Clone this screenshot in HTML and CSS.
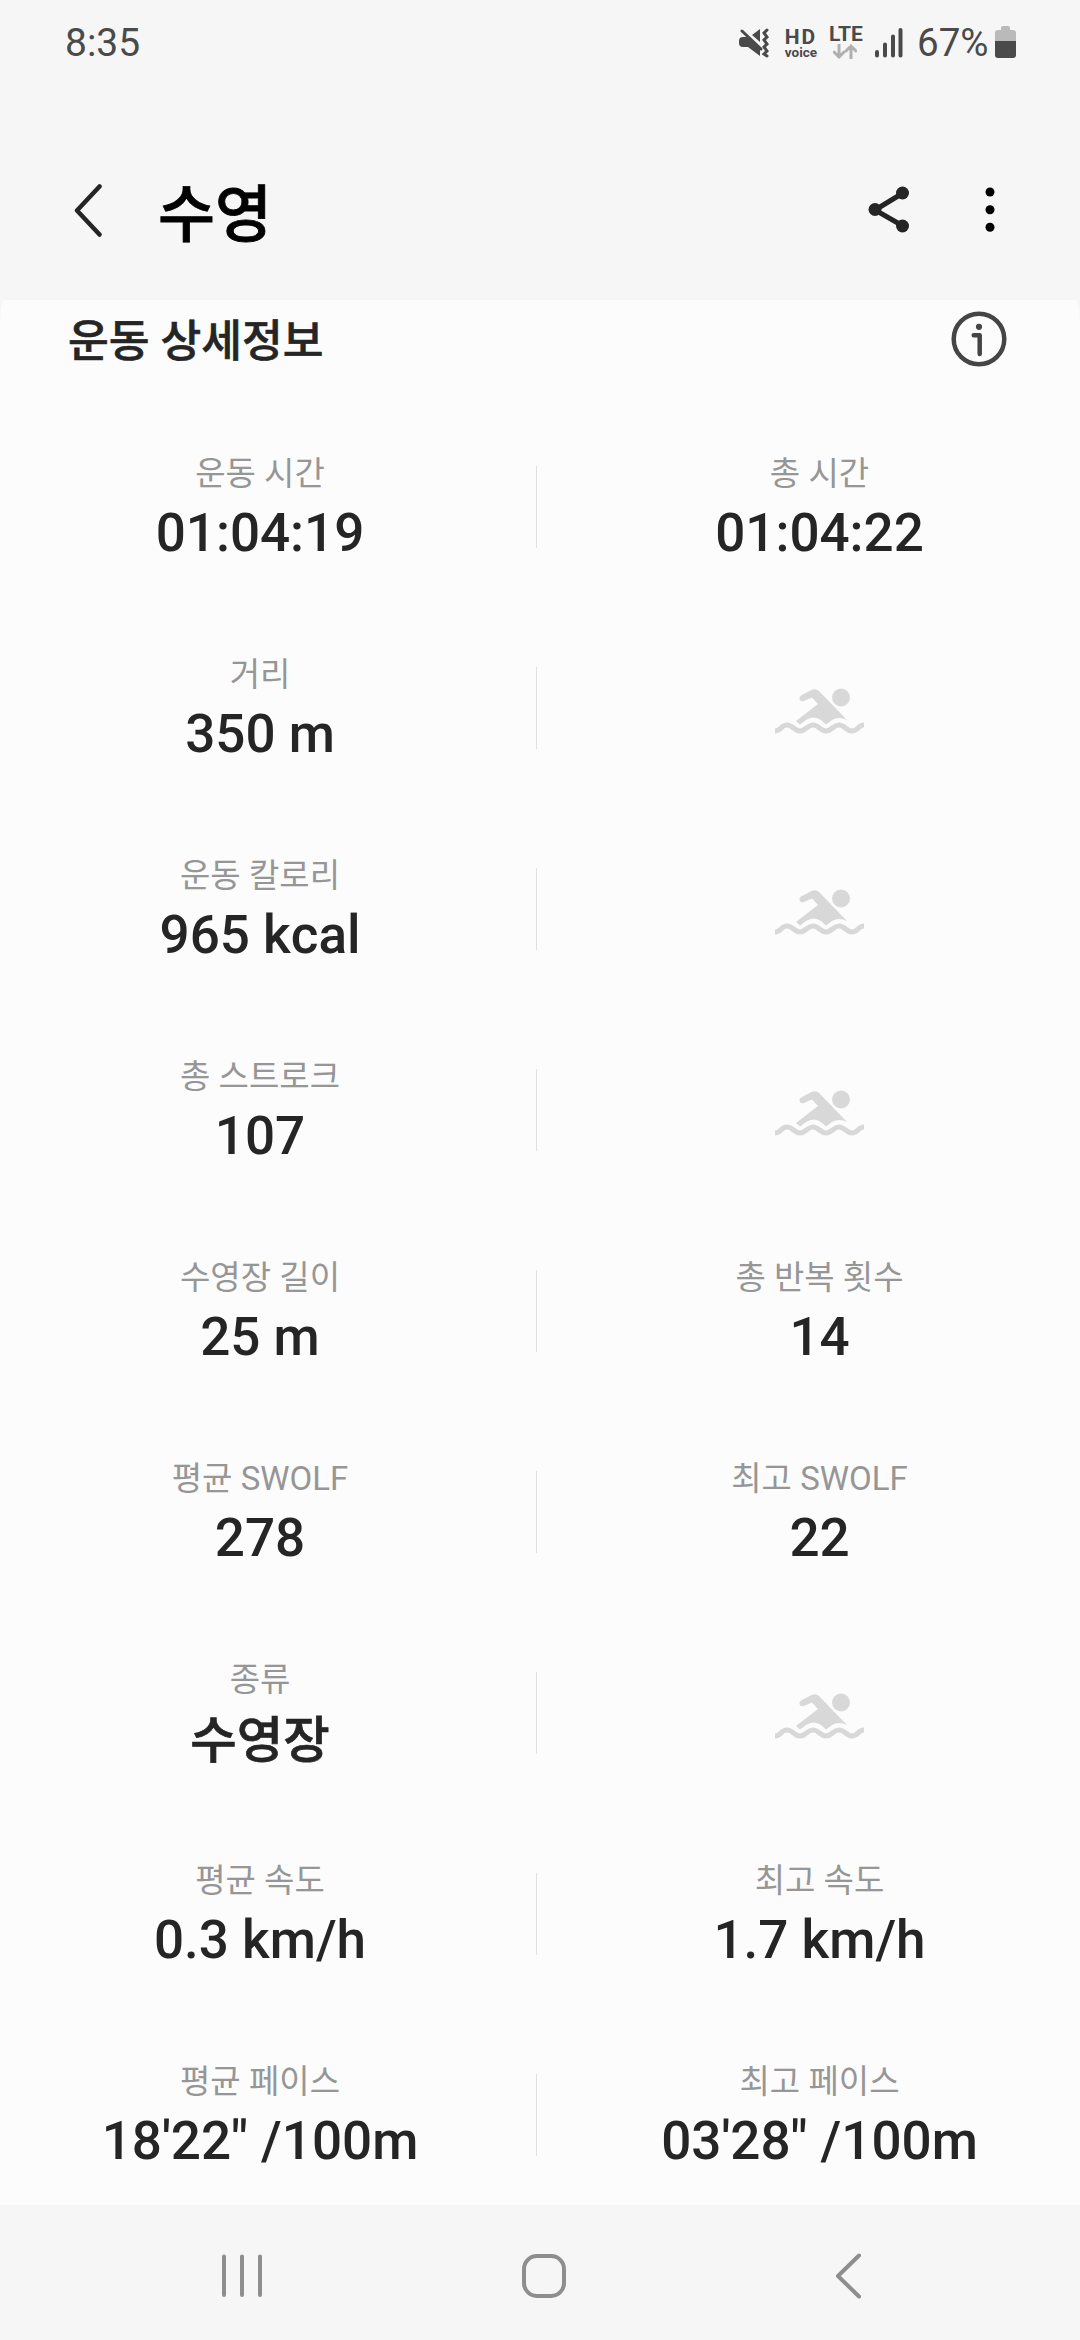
FILE: index.html
```html
<!DOCTYPE html>
<html lang="ko">
<head>
	<meta charset="utf-8">
	<title>수영</title>
	<link rel="stylesheet" href="styles.css">
</head>
<body>
	<svg class="defs" width="0" height="0">
		<symbol id="swimmer" viewBox="0 0 90 46">
			<path d="M26 7.500 L37 1.800 Q41 0 44 3 L72 32 Q64 28 57 32 L51 36.500 L46 32 Q39 27 31 32 L25 36.500 L21 33 L43 16 L37 9.500 L29 13 Q25 14 24.500 11 Q24 9 26 7.500Z"/>
			<circle cx="66" cy="9.500" r="9"/>
			<path class="wave" d="M0 43 C6 43 6 37 12 37 S19 43 25 43 S32 37 38 37 S45 43 51 43 S58 37 64 37 S71 43 77 43 S83 37 89 37"/>
		</symbol>
	</svg>

	<div class="status">
		<span class="clock">8:35</span>
		<svg class="mute" width="30" height="30" viewBox="0 0 30 30">
			<path d="M0 13 Q0 9 4 9 H8 L21 21 V28 L9 19 H4 Q0 19 0 15Z M21 1 V14 L13 7Z"/>
			<path class="line" d="M3 3 L22 21 M28 2 L25 5 L28 9 L25 12 L28 16 L25 19 L28 23 L25 26 L28 28"/>
		</svg>
		<div class="hd">HD<small>voice</small></div>
		<div class="lte">LTE
			<svg width="24" height="15" viewBox="0 0 24 15">
				<path d="M6 1 V13 M1 8 L6 13 L11 8 M18 14 V2 M13 7 L18 2 L23 7"/>
			</svg>
		</div>
		<svg class="signal" width="28" height="30" viewBox="0 0 28 30">
			<path d="M2 24 V27.500 M10 16.500 V27.500 M18 8.500 V27.500 M25.500 2 V27.500"/>
		</svg>
		<span class="percent">67%</span>
		<svg class="battery" width="21" height="32" viewBox="0 0 21 32">
			<path class="empty" d="M6 2 Q6 0 8 0 H13 Q15 0 15 2 V4 H18 Q21 4 21 7 V15 H0 V7 Q0 4 3 4 H6Z"/>
			<path d="M0 15 H21 V29 Q21 32 18 32 H3 Q0 32 0 29Z"/>
		</svg>
	</div>

	<div class="header">
		<svg class="back" width="28" height="53" viewBox="0 0 28 53">
			<path d="M25.500 2.500 L3 26.500 L25.500 50.500"/>
		</svg>
		<h1>수영</h1>
		<svg class="share" width="42" height="48" viewBox="0 0 42 48">
			<path d="M35 7 L7 24 L35 40"/>
			<circle cx="34.500" cy="7" r="6.500"/><circle cx="7" cy="23.500" r="6.500"/><circle cx="34.500" cy="40" r="6.500"/>
		</svg>
		<svg class="more" width="10" height="46" viewBox="0 0 10 46">
			<circle cx="5" cy="5" r="4.500"/><circle cx="5" cy="22.700" r="4.500"/><circle cx="5" cy="40.300" r="4.500"/>
		</svg>
	</div>

	<div class="card">
		<div class="card-title">
			<h2>운동 상세정보</h2>
			<svg class="info" width="56" height="56" viewBox="0 0 56 56">
				<circle class="ring" cx="28" cy="28" r="25.300"/>
				<circle cx="28" cy="15.800" r="3.100"/>
				<path d="M22.700 24.300 H28.700 V43"/>
			</svg>
		</div>

		<div class="row">
			<div class="item"><span class="label">운동 시간</span><span class="value">01:04:19</span></div>
			<div class="divider"></div>
			<div class="item"><span class="label">총 시간</span><span class="value">01:04:22</span></div>
		</div>
		<div class="row">
			<div class="item"><span class="label">거리</span><span class="value">350 m</span></div>
			<div class="divider"></div>
			<svg class="swimmer"><use href="#swimmer"/></svg>
		</div>
		<div class="row">
			<div class="item"><span class="label">운동 칼로리</span><span class="value">965 kcal</span></div>
			<div class="divider"></div>
			<svg class="swimmer"><use href="#swimmer"/></svg>
		</div>
		<div class="row">
			<div class="item"><span class="label">총 스트로크</span><span class="value">107</span></div>
			<div class="divider"></div>
			<svg class="swimmer"><use href="#swimmer"/></svg>
		</div>
		<div class="row">
			<div class="item"><span class="label">수영장 길이</span><span class="value">25 m</span></div>
			<div class="divider"></div>
			<div class="item"><span class="label">총 반복 횟수</span><span class="value">14</span></div>
		</div>
		<div class="row">
			<div class="item"><span class="label">평균 SWOLF</span><span class="value">278</span></div>
			<div class="divider"></div>
			<div class="item"><span class="label">최고 SWOLF</span><span class="value">22</span></div>
		</div>
		<div class="row">
			<div class="item"><span class="label">종류</span><span class="value korean">수영장</span></div>
			<div class="divider"></div>
			<svg class="swimmer"><use href="#swimmer"/></svg>
		</div>
		<div class="row">
			<div class="item"><span class="label">평균 속도</span><span class="value">0.3 km/h</span></div>
			<div class="divider"></div>
			<div class="item"><span class="label">최고 속도</span><span class="value">1.7 km/h</span></div>
		</div>
		<div class="row">
			<div class="item"><span class="label">평균 페이스</span><span class="value">18'22" /100m</span></div>
			<div class="divider"></div>
			<div class="item"><span class="label">최고 페이스</span><span class="value">03'28" /100m</span></div>
		</div>
	</div>

	<div class="navbar">
		<svg width="42" height="46" viewBox="0 0 42 46"><path d="M3 3.500 V42 M21 3.500 V42 M39 3.500 V42"/></svg>
		<svg class="home" width="46" height="46" viewBox="0 0 46 46"><rect x="3" y="3" width="40" height="40" rx="13"/></svg>
		<svg width="28" height="46" viewBox="0 0 28 46"><path d="M25 2.500 L4 23 L25 43.500"/></svg>
	</div>
</body>
</html>
```
FILE: styles.css
```css
* {
	box-sizing: border-box;
}

body {
	margin: 0;
	width: 1080px;
	height: 2340px;
	overflow: hidden;
	background-color: #f6f6f6;
	color: #252525;
	font-family: Roboto, "Noto Sans CJK KR", sans-serif;
}

svg {
	display: block;
	flex: none;
}

.defs {
	position: absolute;
}

/* status bar */
.status {
	display: flex;
	align-items: flex-start;
	height: 84px;
	padding: 26px 64px 0 65px;
	color: #4a4a4a;
	fill: #4a4a4a;
	font-size: 39px;
	line-height: 34px;
}

.clock {
	flex: 1;
}

.mute {
	margin: 2px 15px 0 0;
}

.line {
	fill: none;
	stroke: #4a4a4a;
	stroke-width: 3;
	stroke-linecap: round;
}

.hd {
	width: 34px;
	margin: 3px 11px 0 0;
	font-size: 21px;
	font-weight: bold;
	line-height: 17px;
	letter-spacing: 2px;
	text-align: center;
}

	.hd small {
		display: block;
		font-size: 13.5px;
		line-height: 13px;
		letter-spacing: 0;
	}

.lte {
	width: 34px;
	margin-right: 12px;
	font-size: 21px;
	font-weight: bold;
	line-height: 17px;
}

	.lte svg {
		margin: 1px 0 0 4px;
		fill: none;
		stroke: #b0b0b0;
		stroke-width: 3;
		stroke-linecap: round;
	}

.signal {
	margin: 2px 14px 0 0;
	stroke: #4a4a4a;
	stroke-width: 4;
	stroke-linecap: round;
}

.percent {
	width: 78px;
	font-size: 38.5px;
}

.empty {
	fill: #bababa;
}

/* title bar */
.header {
	display: flex;
	align-items: center;
	height: 216px;
	padding: 36px 85px 0 74px;
}

h1 {
	flex: 1;
	margin: 0 0 0 56px;
	color: #000;
	font-size: 62px;
	font-weight: 500;
	-webkit-text-stroke: 0.8px;
}

.back {
	fill: none;
	stroke: #252525;
	stroke-width: 4.5;
	stroke-linecap: round;
	stroke-linejoin: round;
}

.share {
	margin-right: 75px;
	fill: #252525;
}

	.share path {
		fill: none;
		stroke: #252525;
		stroke-width: 5;
	}

/* workout details */
.card {
	height: 1905px;
	background-color: #fcfcfc;
	border-radius: 4px 4px 0 0 / 30px 30px 0 0;
}

.card-title {
	display: flex;
	justify-content: space-between;
	height: 140px;
	padding: 11px 73px 0 68px;
}

h2 {
	margin: 0;
	font-size: 44.3px;
	font-weight: 500;
	line-height: 62px;
	-webkit-text-stroke: 0.6px;
}

.info path, .ring {
	fill: none;
	stroke: #454545;
	stroke-width: 4.5;
	stroke-linecap: round;
	stroke-linejoin: round;
}

.info {
	fill: #454545;
}

.row {
	display: grid;
	grid-template-columns: 520px 39px 521px;
	height: 201px;
}

.item {
	display: flex;
	flex-direction: column;
	align-items: center;
	padding-top: 10px;
}

.label {
	color: #969696;
	font-size: 33px;
	line-height: 48px;
}

.value {
	font-size: 53px;
	font-weight: 500;
	font-kerning: none;
	line-height: 70px;
	white-space: nowrap;
}

.korean {
	font-size: 50.5px;
	line-height: 73px;
	-webkit-text-stroke: 0.7px;
}

.divider {
	width: 1px;
	height: 82px;
	margin: 26px 0 0 16px;
	background-color: #e0e0e0;
}

.swimmer {
	width: 90px;
	height: 46px;
	margin: 47px auto 0;
	fill: #d8d8d8;
}

.wave {
	fill: none;
	stroke: #d8d8d8;
	stroke-width: 5;
}

/* navigation bar */
.navbar {
	display: flex;
	justify-content: space-between;
	height: 135px;
	padding: 48px 218px 0 221px;
	fill: none;
	stroke: #8e8e8e;
	stroke-width: 4;
	stroke-linecap: round;
	stroke-linejoin: round;
}

.home {
	margin-right: 9px;
}
```
